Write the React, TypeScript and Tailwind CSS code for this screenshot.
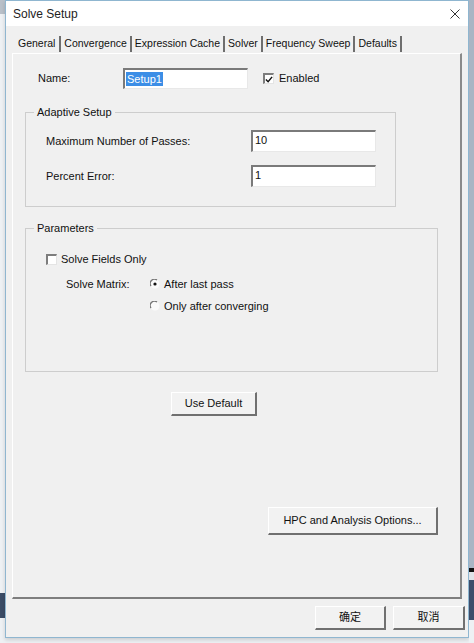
import React from "react";

const font = "font-['Liberation_Sans','Noto_Sans_CJK_SC',sans-serif]";

const tabs = ["General", "Convergence", "Expression Cache", "Solver", "Frequency Sweep", "Defaults"];

function Check({ checked }: { checked?: boolean }) {
  return (
    <span className="w-[11px] h-[11px] flex items-center justify-center bg-white border-t-2 border-l-2 border-[#7d7d7d] border-r border-b border-r-[#e4e4e4] border-b-[#e4e4e4]">
      {checked && (
        <svg width="9" height="9" viewBox="0 0 9 9">
          <path d="M1 4.5 L3.5 7 L8 1.5" fill="none" stroke="#111" strokeWidth="1.6" />
        </svg>
      )}
    </span>
  );
}

function Radio({ checked }: { checked?: boolean }) {
  return (
    <svg width="10" height="10" viewBox="0 0 10 10">
      <circle cx="5" cy="5" r="4.5" fill="#fafafa" />
      <path d="M1 7 A4.3 4.3 0 0 1 7 1" fill="none" stroke="#777" strokeWidth="1.3" />
      {checked && <circle cx="5" cy="5" r="1.6" fill="#111" />}
    </svg>
  );
}

function Field({ value, w, h }: { value: string; w: string; h: string }) {
  return (
    <div className={`${w} ${h} bg-white border-t-2 border-l-2 border-[#7a7a7a] border-r border-b border-r-[#e8e8e8] border-b-[#e8e8e8] px-[2px] flex items-start pt-[2px] text-[11px] leading-[13px]`}>
      {value}
    </div>
  );
}

function Btn({ label, cls }: { label: string; cls: string }) {
  return (
    <button className={`${cls} flex items-center justify-center bg-[#f2f2f2] border-t border-l border-white border-r-2 border-b-2 border-r-[#707070] border-b-[#707070] text-[11px] text-[#111]`}>
      {label}
    </button>
  );
}

export default function App() {
  return (
    <div className={`${font} w-[474px] h-[643px] flex bg-[#eef1f4] text-[#111] overflow-hidden`}>
      {/* left backdrop */}
      <div className="w-[5px] flex flex-col">
        <div className="h-[14px] bg-[#b9c0c9]" />
        <div className="h-[579px] bg-[#eef1f4]" />
        <div className="h-[25px] bg-[#3b4c66]" />
      </div>

      {/* window */}
      <div className="w-[464px] h-[638px] flex flex-col border border-[#8fb6d0] bg-[#f0f0f0] shadow-[0_2px_4px_rgba(0,0,0,0.15)]">
        <div className="h-[25px] bg-white flex items-center justify-between pl-[7px] pr-[8px]">
          <span className="text-[12px] text-[#222]">Solve Setup</span>
          <svg width="10" height="10" viewBox="0 0 10 10">
            <path d="M0.5 0.5 L9.5 9.5 M9.5 0.5 L0.5 9.5" stroke="#333" strokeWidth="1" />
          </svg>
        </div>

        {/* tabs */}
        <div className="mt-[8px] h-[19px] ml-[8px] flex items-stretch text-[10.5px]">
          {tabs.map((t, i) => (
            <div
              key={t}
              className={`flex items-center ${i === 0 ? "pl-[4px] pr-[4px]" : "px-[3px]"} border-r-2 border-[#6e6e6e] mb-[1px] mt-[2px]`}
            >
              {t}
            </div>
          ))}
        </div>

        {/* panel */}
        <div className="ml-[6px] w-[450px] h-[546px] border-t border-l border-white border-r-2 border-b-2 border-r-[#8a8a8a] border-b-[#7e7e7e] text-[11px]">
          <div className="mt-[14px] h-[21px] flex items-center">
            <span className="ml-[25px] w-[85px]">Name:</span>
            <div className="w-[125px] h-[21px] bg-white border-t-2 border-l-2 border-[#7a7a7a] border-r border-b border-r-[#e8e8e8] border-b-[#e8e8e8] flex items-center pl-[1px]">
              <span className="bg-[#3c8ee6] text-white px-[1px] leading-[14px]">Setup1</span>
            </div>
            <span className="ml-[15px]">
              <Check checked />
            </span>
            <span className="ml-[5px]">Enabled</span>
          </div>

          <fieldset className="mt-[17px] ml-[12px] w-[371px] h-[101px] border border-[#cdcdcd]">
            <legend className="ml-[8px] px-[3px] leading-[13px]">Adaptive Setup</legend>
            <div className="mt-[11px] flex items-center">
              <span className="ml-[20px] w-[205px]">Maximum Number of Passes:</span>
              <Field value="10" w="w-[125px]" h="h-[22px]" />
            </div>
            <div className="mt-[13px] flex items-center">
              <span className="ml-[20px] w-[205px]">Percent Error:</span>
              <Field value="1" w="w-[125px]" h="h-[22px]" />
            </div>
          </fieldset>

          <fieldset className="mt-[15px] ml-[12px] w-[413px] h-[150px] border border-[#cdcdcd]">
            <legend className="ml-[8px] px-[3px] leading-[13px]">Parameters</legend>
            <div className="mt-[16px] h-[16px] flex items-center">
              <span className="ml-[20px]">
                <Check />
              </span>
              <span className="ml-[4px]">Solve Fields Only</span>
            </div>
            <div className="mt-[9px] h-[16px] flex items-center">
              <span className="ml-[40px] w-[84px]">Solve Matrix:</span>
              <Radio checked />
              <span className="ml-[4px]">After last pass</span>
            </div>
            <div className="mt-[6px] h-[16px] flex items-center">
              <span className="ml-[124px] flex">
                <Radio />
              </span>
              <span className="ml-[4px]">Only after converging</span>
            </div>
          </fieldset>

          <div className="mt-[20px] ml-[158px]">
            <Btn label="Use Default" cls="w-[86px] h-[24px]" />
          </div>

          <div className="mt-[91px] ml-[255px]">
            <Btn label="HPC and Analysis Options..." cls="w-[170px] h-[28px]" />
          </div>
        </div>

        {/* footer */}
        <div className="flex justify-end gap-[7px] pt-[7px] pr-[3px]">
          <Btn label="确定" cls="w-[71px] h-[24px]" />
          <Btn label="取消" cls="w-[72px] h-[24px]" />
        </div>
      </div>

      {/* right backdrop */}
      <div className="flex-1 flex flex-col">
        <div className="h-[568px] bg-[#a9b5c4]" />
        <div className="h-[4px] bg-[#111]" />
        <div className="h-[8px] bg-[#dfe3e8]" />
        <div className="h-[40px] bg-[#3c4e6b]" />
        <div className="flex-1 bg-[#eef1f4]" />
      </div>
    </div>
  );
}
